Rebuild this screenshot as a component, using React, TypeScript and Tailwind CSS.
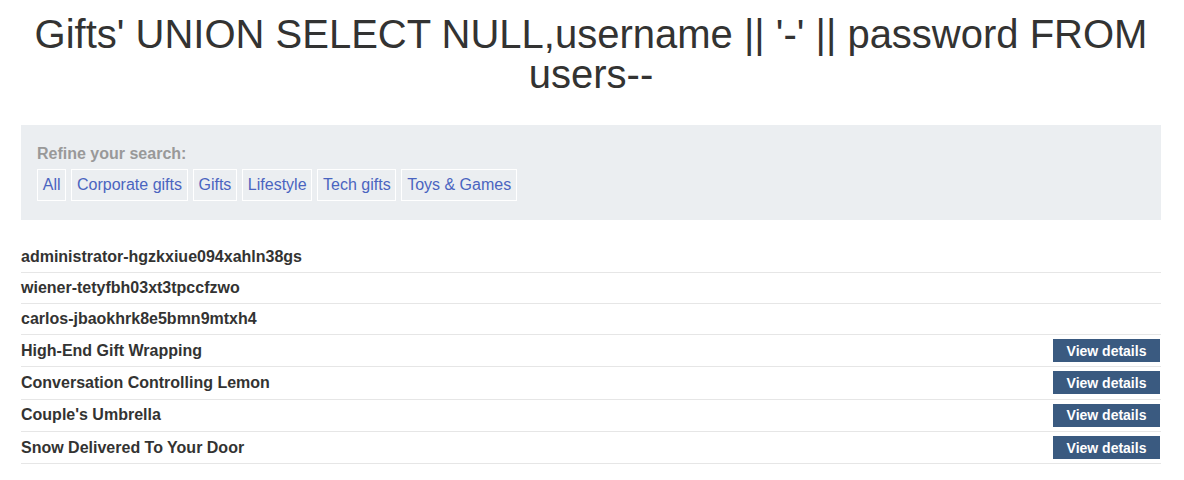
const categories = ['All', 'Corporate gifts', 'Gifts', 'Lifestyle', 'Tech gifts', 'Toys & Games'];

const rows: { name: string; details?: boolean }[] = [
  { name: 'administrator-hgzkxiue094xahln38gs' },
  { name: 'wiener-tetyfbh03xt3tpccfzwo' },
  { name: 'carlos-jbaokhrk8e5bmn9mtxh4' },
  { name: 'High-End Gift Wrapping', details: true },
  { name: 'Conversation Controlling Lemon', details: true },
  { name: "Couple's Umbrella", details: true },
  { name: 'Snow Delivered To Your Door', details: true },
];

export default function App() {
  return (
    <div className="min-h-[480px] bg-white font-['Liberation_Sans',Arial,sans-serif] text-[#333332]">
      <div className="ml-[21px] w-[1140px] pt-[15px]">
        <h1 className="text-center text-[40px] leading-[39.5px] font-normal">
          Gifts' UNION SELECT NULL,username || '-' || password FROM users--
        </h1>

        {/* filter panel */}
        <section className="mt-[31px] bg-[#ebeef1] px-4 pt-[20px] pb-[19px]">
          <div className="text-base leading-[18px] font-bold text-[#999999]">Refine your search:</div>
          <div className="mt-[6px] flex gap-[5px]">
            {categories.map((c) => (
              <a
                key={c}
                className="border border-white px-[4.75px] py-[6px] text-base leading-[18px] text-[#4a64c0]"
              >
                {c}
              </a>
            ))}
          </div>
        </section>

        {/* results */}
        <div className="mt-[21px]">
          {rows.map((r, i) => (
            <div
              key={r.name}
              className={`flex items-center justify-between border-b border-[#e6e6e6] ${r.details ? 'h-[32.3px]' : i === 0 ? 'h-[32px]' : 'h-[31px]'}`}
            >
              <span className="text-base leading-[18px] font-bold">{r.name}</span>
              {r.details && (
                <button className="mr-px flex h-[23px] w-[107px] items-center justify-center bg-[#3a5a80] text-sm font-bold text-white">
                  View details
                </button>
              )}
            </div>
          ))}
        </div>
      </div>
    </div>
  );
}
